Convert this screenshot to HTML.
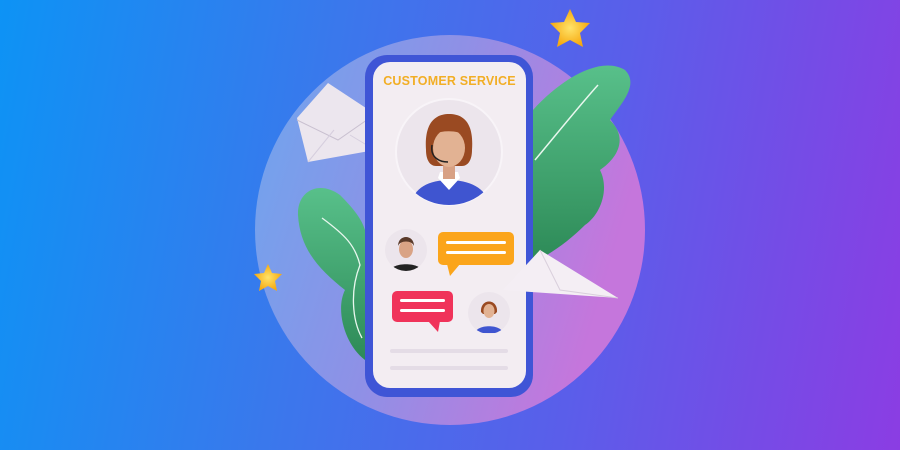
<!DOCTYPE html>
<html><head><style>
html,body{margin:0;padding:0;width:900px;height:450px;overflow:hidden}
body{background:linear-gradient(100deg,#0d93f5 0%,#3a78ec 35%,#5a5eea 65%,#8b3de3 100%);position:relative;font-family:"Liberation Sans",sans-serif}
.abs{position:absolute}
</style></head><body>
<svg class="abs" style="left:0;top:0" width="900" height="450" viewBox="0 0 900 450">
<defs>
<linearGradient id="circ" x1="0" y1="0" x2="1" y2="0.3">
<stop offset="0" stop-color="#6ea6ee"/><stop offset="0.5" stop-color="#8f90e6"/><stop offset="1" stop-color="#c576dc"/>
</linearGradient>
<linearGradient id="leaf" x1="0" y1="0" x2="0" y2="1">
<stop offset="0" stop-color="#58c08a"/><stop offset="1" stop-color="#2d8a57"/>
</linearGradient>
<radialGradient id="star"><stop offset="0" stop-color="#ffe36a"/><stop offset="1" stop-color="#f6a90f"/></radialGradient>
</defs>
<circle cx="450" cy="230" r="195" fill="url(#circ)"/>
<path d="M533 110 C560 80 600 55 625 70 C640 85 620 105 610 120 C630 140 615 160 600 170 C610 190 600 215 585 225 C570 240 550 255 533 262 Z" fill="url(#leaf)"/>
<path d="M535 160 C560 130 580 105 598 85" stroke="#e8f7ee" stroke-width="1.5" fill="none"/>
<path d="M365 360 C345 345 335 310 345 290 C320 270 300 250 298 215 C297 190 320 180 340 195 C355 210 362 220 365 230 Z" fill="url(#leaf)"/>
<path d="M322 218 C345 235 355 245 360 265 C350 290 352 320 362 338" stroke="#e8f7ee" stroke-width="1.3" fill="none"/>
<g>
<path d="M297 118 L328 83 L372 112 L375 150 L308 162 Z" fill="#ece6ee"/>
<path d="M297 120 L338 140 L374 115" stroke="#c9c0d0" fill="none"/>
<path d="M308 162 L334 130 M350 135 L375 150" stroke="#d6cede" fill="none"/>
</g>
<rect x="365" y="55" width="168" height="342" rx="22" fill="#3f55d6"/>
<rect x="373" y="62" width="153" height="326" rx="17" fill="#f3edf2"/>
<circle cx="449" cy="152" r="53" fill="#ece5ec" stroke="#f8f4f8" stroke-width="2"/>
<clipPath id="c1"><circle cx="449" cy="152" r="53"/></clipPath>
<g clip-path="url(#c1)">
<path d="M412 205 C412 188 430 180 449 180 C468 180 488 188 488 205 Z" fill="#3f55d0"/>
<path d="M438 178 L449 190 L460 178 L458 172 L440 172 Z" fill="#fff"/>
<rect x="443" y="162" width="12" height="17" fill="#d8a184"/>
<path d="M426 150 C424 122 436 114 449 114 C463 114 474 122 472 150 C472 160 468 166 462 166 L436 166 C430 166 426 160 426 150 Z" fill="#9a4a22"/>
<ellipse cx="449" cy="148" rx="16" ry="19" fill="#e2b293"/>
<path d="M433 134 C438 124 460 122 466 136 C458 130 444 130 433 134 Z" fill="#9a4a22"/>
<path d="M432 145 C430 158 440 162 448 162" stroke="#222" stroke-width="1.5" fill="none"/>
</g>
<circle cx="406" cy="250" r="21" fill="#ece5ec"/>
<clipPath id="c2"><circle cx="406" cy="250" r="21"/></clipPath>
<g clip-path="url(#c2)">
<path d="M390 271 C392 262 420 262 422 271 Z" fill="#222"/>
<ellipse cx="406" cy="249" rx="7" ry="9" fill="#d9a385"/>
<path d="M398 246 C398 234 414 234 414 246 C412 240 400 240 398 246 Z" fill="#5a3a2a"/>
</g>
<rect x="438" y="232" width="76" height="33" rx="5" fill="#fba51b"/>
<path d="M447 264 L450 276 L460 264 Z" fill="#fba51b"/>
<rect x="446" y="241" width="60" height="3" rx="1.5" fill="#fff"/>
<rect x="446" y="251" width="60" height="3" rx="1.5" fill="#fff"/>
<rect x="392" y="291" width="61" height="31" rx="5" fill="#f0335a"/>
<path d="M428 321 L438 332 L440 321 Z" fill="#f0335a"/>
<rect x="400" y="299" width="45" height="3" rx="1.5" fill="#fff"/>
<rect x="400" y="309" width="45" height="3" rx="1.5" fill="#fff"/>
<circle cx="489" cy="313" r="21" fill="#ece5ec"/>
<clipPath id="c3"><circle cx="489" cy="313" r="21"/></clipPath>
<g clip-path="url(#c3)">
<path d="M475 333 C477 324 501 324 503 333 Z" fill="#3f55d0"/>
<path d="M481 312 C480 298 498 298 497 312 L495 314 L483 314 Z" fill="#9a4a22"/>
<ellipse cx="489" cy="311" rx="5.5" ry="7" fill="#e2b293"/>
</g>
<rect x="390" y="349" width="118" height="4" rx="2" fill="#e4dce6"/>
<rect x="390" y="366" width="118" height="4" rx="2" fill="#e4dce6"/>
<path d="M503 290 L540 250 L618 298 Z" fill="#f4eef4"/>
<path d="M540 250 L560 290 L618 298" stroke="#d9cfdc" fill="none"/>
<path d="M570 9 L576 22 L590 23 L580 33 L583 47 L570 40 L557 47 L560 33 L550 23 L564 22 Z" fill="url(#star)"/>
<path d="M268 264 L272 273 L282 274 L275 281 L277 291 L268 286 L259 291 L261 281 L254 274 L264 273 Z" fill="url(#star)"/>
</svg>
<div class="abs" style="left:373px;top:74px;width:153px;text-align:center;color:#f2ae25;font-size:12.5px;font-weight:bold;letter-spacing:0.2px">CUSTOMER SERVICE</div>
</body></html>
